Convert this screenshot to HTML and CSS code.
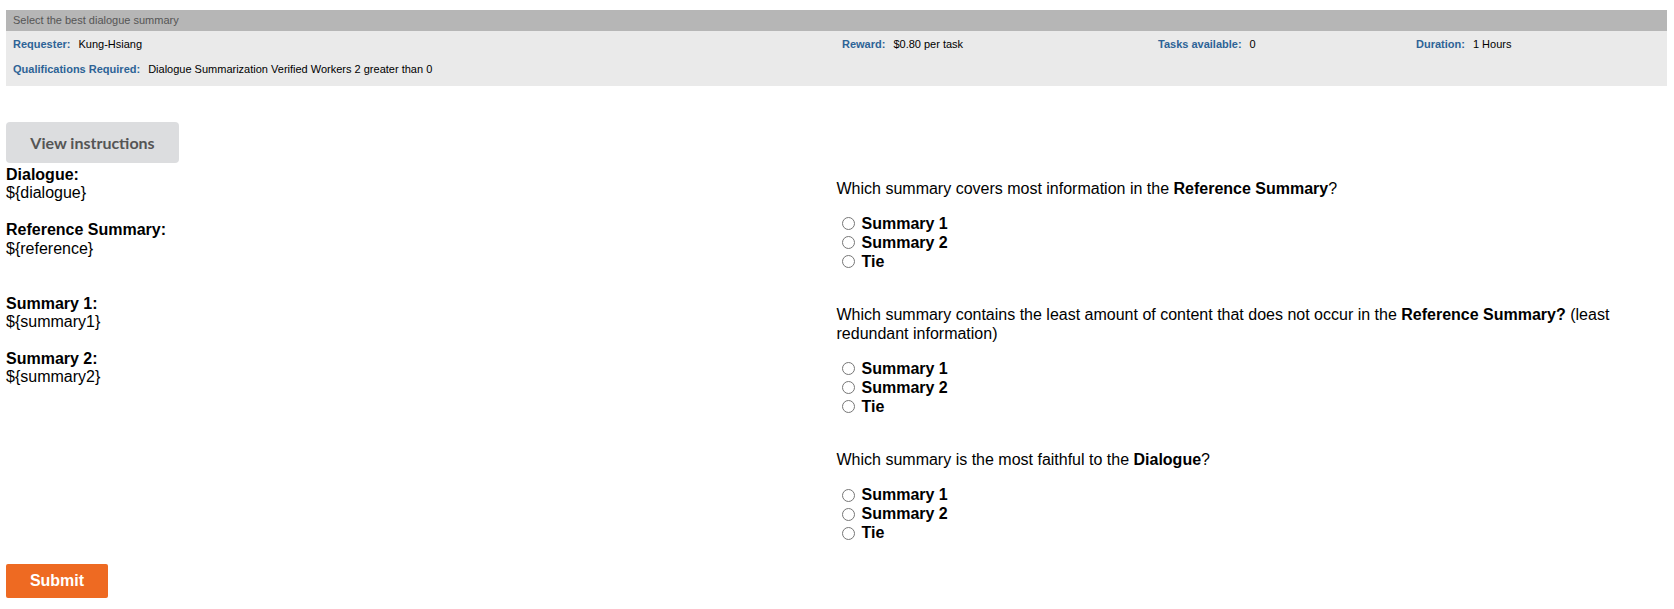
FILE: index.html
```html
<!DOCTYPE html>
<html>
<head>
<meta charset="utf-8">
<link rel="stylesheet" href="styles.css">
</head>
<body>
<div class="page">
  <div class="hit-header">
    <div class="hit-title">Select the best dialogue summary</div>
    <div class="hit-info">
      <div class="cell"><span class="lbl">Requester:</span><span class="val">Kung-Hsiang</span></div>
      <div class="cell"><span class="lbl">Reward:</span><span class="val">$0.80 per task</span></div>
      <div class="cell"><span class="lbl">Tasks available:</span><span class="val">0</span></div>
      <div class="cell"><span class="lbl">Duration:</span><span class="val">1 Hours</span></div>
      <div class="cell wide"><span class="lbl">Qualifications Required:</span><span class="val">Dialogue Summarization Verified Workers 2 greater than 0</span></div>
    </div>
  </div>

  <button class="btn-instructions" type="button">View instructions</button>

  <div class="columns">
    <div class="col-left">
      <b>Dialogue:</b><br>${dialogue}<br><br>
      <b>Reference Summary:</b><br>${reference}<br><br><br>
      <b>Summary 1:</b><br>${summary1}<br><br>
      <b>Summary 2:</b><br>${summary2}
    </div>
    <div class="col-right">
      <div class="question">
        <p class="q-text">Which summary covers most information in the <b>Reference Summary</b>?</p>
        <div class="opt"><input type="radio" name="q1" id="q1a"><label for="q1a">Summary 1</label></div>
        <div class="opt"><input type="radio" name="q1" id="q1b"><label for="q1b">Summary 2</label></div>
        <div class="opt"><input type="radio" name="q1" id="q1c"><label for="q1c">Tie</label></div>
      </div>
      <div class="question">
        <p class="q-text">Which summary contains the least amount of content that does not occur in the <b>Reference Summary?</b> (least redundant information)</p>
        <div class="opt"><input type="radio" name="q2" id="q2a"><label for="q2a">Summary 1</label></div>
        <div class="opt"><input type="radio" name="q2" id="q2b"><label for="q2b">Summary 2</label></div>
        <div class="opt"><input type="radio" name="q2" id="q2c"><label for="q2c">Tie</label></div>
      </div>
      <div class="question">
        <p class="q-text">Which summary is the most faithful to the <b>Dialogue</b>?</p>
        <div class="opt"><input type="radio" name="q3" id="q3a"><label for="q3a">Summary 1</label></div>
        <div class="opt"><input type="radio" name="q3" id="q3b"><label for="q3b">Summary 2</label></div>
        <div class="opt"><input type="radio" name="q3" id="q3c"><label for="q3c">Tie</label></div>
      </div>
    </div>
  </div>

  <button class="btn-submit" type="submit">Submit</button>
</div>
</body>
</html>
```

FILE: styles.css
```css
html, body {
  margin: 0;
  padding: 0;
  background: #ffffff;
}

.page {
  padding: 10px 7px 0 6px;
  font-family: "Liberation Sans", Arial, Helvetica, sans-serif;
  color: #000;
}

.hit-title {
  height: 21px;
  line-height: 21px;
  background: #b6b6b6;
  color: #555555;
  font-size: 11px;
  padding-left: 7px;
}

.hit-info {
  background: #eaeaea;
  height: 55px;
  box-sizing: border-box;
  padding: 1px 0 0 7px;
  display: grid;
  grid-template-columns: 829px 316px 258px 1fr;
  grid-auto-rows: 24px;
  row-gap: 1px;
  font-size: 11px;
}

.cell {
  display: flex;
  align-items: center;
  white-space: nowrap;
}

.cell.wide {
  grid-column: 1 / -1;
}

.lbl {
  color: #2d6396;
  font-weight: bold;
  margin-right: 8px;
}

.val {
  color: #000;
}

.btn-instructions {
  display: block;
  margin: 36px 0 0 0;
  width: 173px;
  height: 41px;
  border: none;
  border-radius: 4px;
  background: #dcdddf;
  color: #555555;
  font-family: Lato, "Liberation Sans", sans-serif;
  font-weight: bold;
  font-size: 16px;
  padding: 0;
}

.columns {
  display: grid;
  grid-template-columns: 1fr 1fr;
  margin-top: 3px;
  font-size: 16px;
  line-height: 18.4px;
}

.question {
  padding-bottom: 21px;
}

.q-text {
  margin: 14px 0 16px 0;
}

.opt {
  display: flex;
  align-items: center;
  height: 19px;
  font-weight: bold;
}

.opt input {
  margin: 0 3px 0 5px;
  width: 13px;
  height: 13px;
}

.opt label {
  margin-left: 4px;
}

.btn-submit {
  display: block;
  width: 102px;
  height: 34px;
  margin: 0;
  border: none;
  border-radius: 2px;
  background: #ee6a22;
  color: #ffffff;
  font-family: "Liberation Sans", Arial, sans-serif;
  font-weight: bold;
  font-size: 16px;
  padding: 0;
}
```
